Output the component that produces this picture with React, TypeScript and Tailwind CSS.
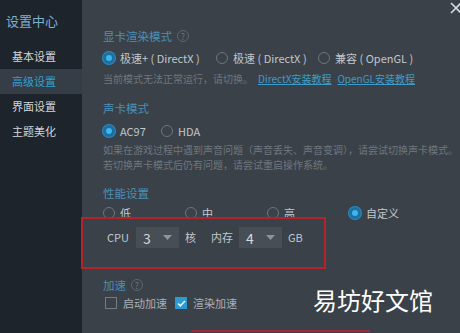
import React from "react"

const font = { fontFamily: '"Noto Sans CJK SC", "Noto Sans", sans-serif' }

function Radio({ label, checked }: { label: string; checked?: boolean }) {
    return (
        <div className="flex items-center gap-[5px] whitespace-nowrap">
            {checked ? (
                <span className="flex h-[12px] w-[12px] items-center justify-center rounded-full bg-[#1c6f9e] ring-1 ring-[#2b8cc2]">
                    <span className="h-[6px] w-[6px] rounded-full bg-[#3fb4ee]" />
                </span>
            ) : (
                <span className="h-[12px] w-[12px] rounded-full border border-[#6d757d]" />
            )}
            <span className="text-[11px] leading-[16px] text-[#c2c7cc]">{label}</span>
        </div>
    )
}

function Help() {
    return (
        <span className="ml-[5px] flex h-[12px] w-[12px] items-center justify-center rounded-full border border-[#5d6770] text-[9px] leading-none text-[#6d7780]">
            ?
        </span>
    )
}

function SectionTitle({ children, help }: { children: React.ReactNode; help?: boolean }) {
    return (
        <div className="flex items-center whitespace-nowrap text-[11.5px] leading-[16px] text-[#4b8fb6]">
            {children}
            {help && <Help />}
        </div>
    )
}

function Select({ value }: { value: string }) {
    return (
        <div className="flex h-[21px] w-[43px] items-center justify-between bg-[#474e56] pl-[7px] pr-[7px]">
            <span className="text-[14px] leading-none text-[#d5d9dc]">{value}</span>
            <svg width="9" height="5" viewBox="0 0 9 5">
                <path d="M0 0h9L4.5 5z" fill="#8d959c" />
            </svg>
        </div>
    )
}

function Check({ label, checked }: { label: string; checked?: boolean }) {
    return (
        <div className="flex items-center gap-[6px] whitespace-nowrap">
            {checked ? (
                <span className="flex h-[12px] w-[12px] items-center justify-center bg-[#2a9bd4]">
                    <svg width="9" height="7" viewBox="0 0 9 7">
                        <path d="M1 3.5l2.3 2.3L8 1" stroke="#e8f4fb" strokeWidth="1.6" fill="none" />
                    </svg>
                </span>
            ) : (
                <span className="h-[12px] w-[12px] border border-[#737b83]" />
            )}
            <span className="text-[11px] leading-[16px] text-[#aab0b6]">{label}</span>
        </div>
    )
}

export default function App() {
    const menu = ["基本设置", "高级设置", "界面设置", "主题美化"]

    return (
        <div className="relative flex h-[333px] w-[460px] overflow-hidden bg-[#3a4149]" style={font}>
            <aside className="flex w-[82px] shrink-0 flex-col bg-[#1e242c]">
                <div className="flex h-[44px] items-center pl-[6px] pb-[2px] text-[13px] text-[#7fb0cc]">设置中心</div>
                {menu.map((m) => (
                    <div
                        key={m}
                        className={
                            m === "高级设置"
                                ? "flex h-[25px] items-center bg-[#353d46] pl-[12px] text-[11px] text-[#2fa0d2]"
                                : "flex h-[25px] items-center pl-[12px] text-[11px] text-[#d2d6da]"
                        }
                    >
                        {m}
                    </div>
                ))}
            </aside>

            <main className="flex min-w-0 flex-1 flex-col whitespace-nowrap pl-[21px] pt-[28px]">
                <SectionTitle help>显卡渲染模式</SectionTitle>
                <div className="mt-[4px] flex h-[20px] items-center">
                    <div className="w-[113px]"><Radio label="极速+ ( DirectX )" checked /></div>
                    <div className="w-[102px]"><Radio label="极速 ( DirectX )" /></div>
                    <Radio label="兼容 ( OpenGL )" />
                </div>
                <div className="mt-[3px] flex text-[10px] leading-[16px] text-[#6f777f]">
                    <span className="w-[155px]">当前模式无法正常运行，请切换。</span>
                    <span className="mr-[6px] text-[#3b9ccb] underline">DirectX安装教程</span>
                    <span className="text-[#3b9ccb] underline">OpenGL安装教程</span>
                </div>

                <div className="mt-[13px]"><SectionTitle>声卡模式</SectionTitle></div>
                <div className="mt-[5px] flex h-[20px] items-center">
                    <div className="w-[58px]"><Radio label="AC97" checked /></div>
                    <Radio label="HDA" />
                </div>
                <div className="mt-[1px] text-[10px] leading-[15px] text-[#6f777f]">
                    <div>如果在游戏过程中遇到声音问题（声音丢失、声音变调），请尝试切换声卡模式。</div>
                    <div>若切换声卡模式后仍有问题，请尝试重启操作系统。</div>
                </div>

                <div className="mt-[13px]"><SectionTitle>性能设置</SectionTitle></div>
                <div className="mt-[2px] flex h-[20px] items-center">
                    <div className="w-[82px]"><Radio label="低" /></div>
                    <div className="w-[82px]"><Radio label="中" /></div>
                    <div className="w-[82px]"><Radio label="高" /></div>
                    <Radio label="自定义" checked />
                </div>
                <div className="mt-[4px] flex items-center pl-[4px] text-[11px] text-[#c2c7cc]">
                    <span className="w-[29px]">CPU</span>
                    <Select value="3" />
                    <span className="ml-[6px] w-[26px]">核</span>
                    <span className="w-[28px]">内存</span>
                    <Select value="4" />
                    <span className="ml-[6px]">GB</span>
                </div>

                <div className="mt-[29px]"><SectionTitle help>加速</SectionTitle></div>
                <div className="mt-[2px] flex items-center pl-[2px]">
                    <div className="w-[70px]"><Check label="启动加速" /></div>
                    <Check label="渲染加速" checked />
                </div>
            </main>

            <div className="absolute left-[81px] top-[217px] h-[52px] w-[245px] border-2 border-[#b3232b]" />
            <div className="absolute left-[191px] top-[330px] h-[3px] w-[179px] border-t-2 border-[#9b2a36]" />
            <svg className="absolute right-[-2px] top-[2px]" width="12" height="12" viewBox="0 0 12 12">
                <path d="M1 1l10 10M11 1L1 11" stroke="#d6dade" strokeWidth="1.6" />
            </svg>
            <div className="absolute left-[313px] top-[284px] text-[24px] leading-[32px] text-white">易坊好文馆</div>
        </div>
    )
}
